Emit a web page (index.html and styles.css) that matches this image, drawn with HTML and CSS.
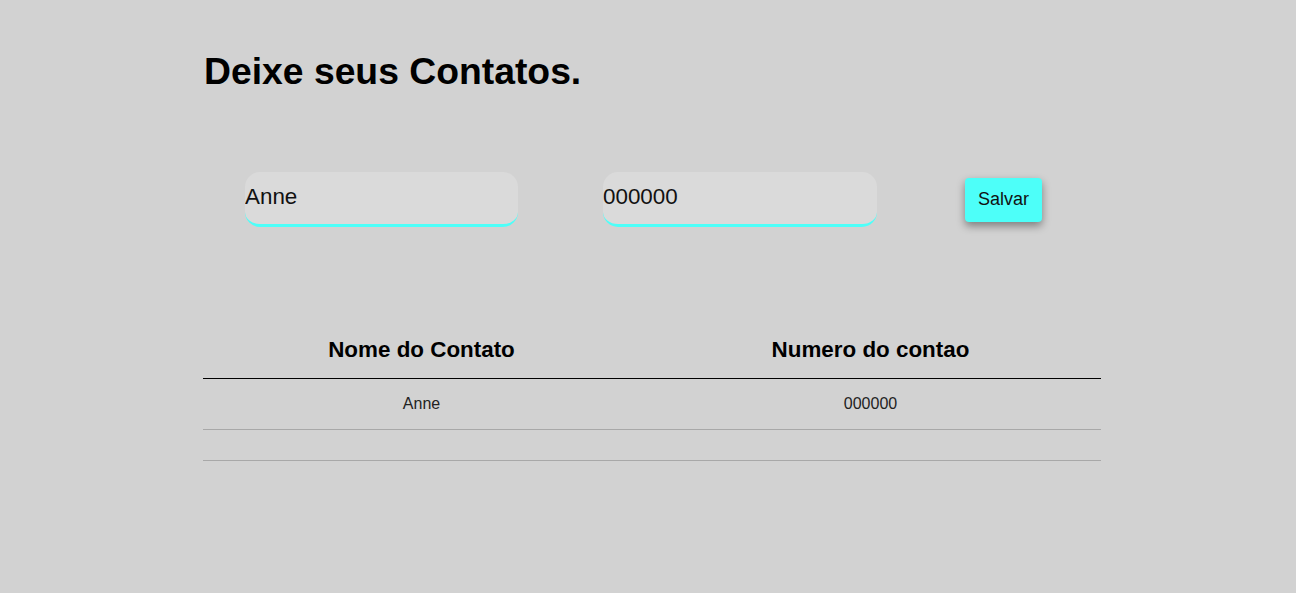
FILE: index.html
```html
<!DOCTYPE html>
<html lang="pt">
<head>
<meta charset="utf-8">
<title>Contatos</title>
<link rel="stylesheet" href="styles.css">
</head>
<body>
<main class="page">
  <h1 class="title">Deixe seus Contatos.</h1>
  <form class="contact-form">
    <input class="field" type="text" value="Anne">
    <input class="field field-number" type="text" value="000000">
    <button class="save" type="button">Salvar</button>
  </form>
  <table class="contacts">
    <thead>
      <tr>
        <th class="col-name">Nome do Contato</th>
        <th>Numero do contao</th>
      </tr>
    </thead>
    <tbody>
      <tr>
        <td>Anne</td>
        <td>000000</td>
      </tr>
      <tr>
        <td></td>
        <td></td>
      </tr>
    </tbody>
  </table>
</main>
</body>
</html>
```

FILE: styles.css
```css
html, body {
  margin: 0;
  padding: 0;
  background: #d2d2d2;
  font-family: "Liberation Sans", Arial, sans-serif;
  color: #000;
}

.page {
  width: 897px;
  margin-left: 204px;
  padding-top: 50px;
}

.title {
  margin: 0;
  font-size: 37.3px;
  font-weight: bold;
  line-height: 42px;
}

.contact-form {
  display: flex;
  align-items: center;
  margin-top: 80px;
  padding-left: 41px;
}

.field {
  box-sizing: border-box;
  width: 273px;
  height: 55px;
  padding: 0 0 3px 0;
  margin: 0;
  border: none;
  border-bottom: 3px solid #4dfff9;
  border-radius: 15px;
  background: #dadada;
  font-family: "Liberation Sans", Arial, sans-serif;
  font-size: 22.4px;
  color: #111;
  outline: none;
}

.field-number {
  width: 274px;
  margin-left: 85px;
}

.save {
  margin-left: 88px;
  width: 77px;
  height: 44px;
  border: none;
  border-radius: 4px;
  background: #4dfff9;
  font-family: "Liberation Sans", Arial, sans-serif;
  font-size: 18px;
  color: #111;
  box-shadow: 0 4px 8px rgba(0, 0, 0, 0.4);
  cursor: pointer;
}

.contacts {
  width: 898px;
  margin-top: 96px;
  margin-left: -1px;
  border-collapse: collapse;
}

.contacts th {
  padding: 14px 0 16px;
  font-size: 22.4px;
  line-height: 25px;
  font-weight: bold;
  text-align: center;
  border-bottom: 1px solid #000;
}

.contacts .col-name {
  width: 437px;
}

.contacts td {
  padding: 15px 0;
  font-size: 16px;
  line-height: 20px;
  text-align: center;
  color: #222;
  border-bottom: 1px solid #a8a8a8;
}
```
